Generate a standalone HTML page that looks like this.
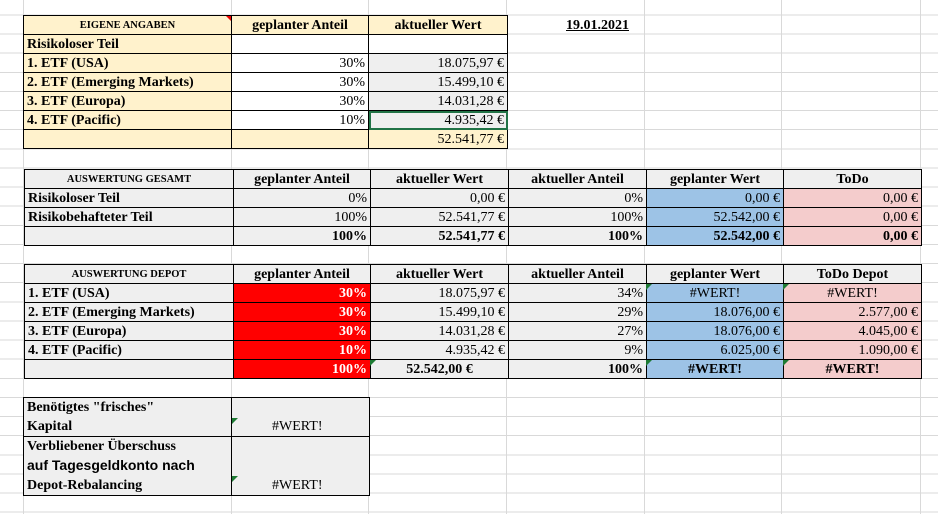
<!DOCTYPE html>
<html><head><meta charset="utf-8"><style>
body{margin:0;width:938px;height:514px;overflow:hidden;background:#fff;font-family:"Liberation Serif",serif;font-size:14px;color:#000;position:relative;
background-image:repeating-linear-gradient(to bottom,transparent 0,transparent 14.5px,#d9d9d9 14.5px,#d9d9d9 15.5px,transparent 15.5px,transparent 19.12px);}
.v{position:absolute;top:0;height:514px;width:1px;background:#d9d9d9}
table{position:absolute;border-collapse:collapse;table-layout:fixed}
td{border:1px solid #000;height:16px;padding:2px 3px 0;white-space:nowrap;overflow:hidden;line-height:16px}
.b{font-weight:bold}.r{text-align:right}.c{text-align:center}
.y{background:#fff2cc}.g{background:#efefef}.w{background:#fff}.bl{background:#9dc3e6}.p{background:#f4cccc}.red{background:#ff0000;color:#fff;font-weight:bold}
.sm{font-size:10.5px}
.tri{position:absolute;width:0;height:0;border-top:6px solid #1e7b34;border-right:6px solid transparent}
</style></head><body>
<div class="v" style="left:23px"></div><div class="v" style="left:231px"></div><div class="v" style="left:368px"></div><div class="v" style="left:506px"></div><div class="v" style="left:644px"></div><div class="v" style="left:781px"></div><div class="v" style="left:920px"></div>

<table style="left:23px;top:15px;width:484px">
<col style="width:208px"><col style="width:137px"><col style="width:139px">
<tr><td class="y b c sm">EIGENE ANGABEN</td><td class="y b c">geplanter Anteil</td><td class="y b c">aktueller Wert</td></tr>
<tr><td class="y b">Risikoloser Teil</td><td class="w"></td><td class="w"></td></tr>
<tr><td class="y b">1. ETF (USA)</td><td class="w r">30%</td><td class="g r">18.075,97 €</td></tr>
<tr><td class="y b">2. ETF (Emerging Markets)</td><td class="w r">30%</td><td class="g r">15.499,10 €</td></tr>
<tr><td class="y b">3. ETF (Europa)</td><td class="w r">30%</td><td class="g r">14.031,28 €</td></tr>
<tr><td class="y b">4. ETF (Pacific)</td><td class="w r">10%</td><td class="g r" style="outline:2px solid #217346;outline-offset:-2px">4.935,42 €</td></tr>
<tr><td class="y"></td><td class="y"></td><td class="y r">52.541,77 €</td></tr>
</table>
<div style="position:absolute;left:226px;top:16px;width:0;height:0;border-top:5px solid #e00;border-left:5px solid transparent"></div>
<div class="b" style="position:absolute;left:566px;top:18px;text-decoration:underline">19.01.2021</div>

<table style="left:24px;top:169px;width:897px">
<col style="width:209px"><col style="width:137px"><col style="width:138px"><col style="width:138px"><col style="width:137px"><col style="width:138px">
<tr><td class="g b c sm">AUSWERTUNG GESAMT</td><td class="g b c">geplanter Anteil</td><td class="g b c">aktueller Wert</td><td class="g b c">aktueller Anteil</td><td class="g b c">geplanter Wert</td><td class="g b c">ToDo</td></tr>
<tr><td class="g b">Risikoloser Teil</td><td class="g r">0%</td><td class="g r">0,00 €</td><td class="g r">0%</td><td class="bl r">0,00 €</td><td class="p r">0,00 €</td></tr>
<tr><td class="g b">Risikobehafteter Teil</td><td class="g r">100%</td><td class="g r">52.541,77 €</td><td class="g r">100%</td><td class="bl r">52.542,00 €</td><td class="p r">0,00 €</td></tr>
<tr><td class="g"></td><td class="g r b">100%</td><td class="g r b">52.541,77 €</td><td class="g r b">100%</td><td class="bl r b">52.542,00 €</td><td class="p r b">0,00 €</td></tr>
</table>

<table style="left:24px;top:264px;width:897px">
<col style="width:209px"><col style="width:137px"><col style="width:138px"><col style="width:138px"><col style="width:137px"><col style="width:138px">
<tr><td class="g b c sm">AUSWERTUNG DEPOT</td><td class="g b c">geplanter Anteil</td><td class="g b c">aktueller Wert</td><td class="g b c">aktueller Anteil</td><td class="g b c">geplanter Wert</td><td class="g b c">ToDo Depot</td></tr>
<tr><td class="g b">1. ETF (USA)</td><td class="red r">30%</td><td class="g r">18.075,97 €</td><td class="g r">34%</td><td class="bl c">#WERT!</td><td class="p c">#WERT!</td></tr>
<tr><td class="g b">2. ETF (Emerging Markets)</td><td class="red r">30%</td><td class="g r">15.499,10 €</td><td class="g r">29%</td><td class="bl r">18.076,00 €</td><td class="p r">2.577,00 €</td></tr>
<tr><td class="g b">3. ETF (Europa)</td><td class="red r">30%</td><td class="g r">14.031,28 €</td><td class="g r">27%</td><td class="bl r">18.076,00 €</td><td class="p r">4.045,00 €</td></tr>
<tr><td class="g b">4. ETF (Pacific)</td><td class="red r">10%</td><td class="g r">4.935,42 €</td><td class="g r">9%</td><td class="bl r">6.025,00 €</td><td class="p r">1.090,00 €</td></tr>
<tr><td class="g"></td><td class="red r">100%</td><td class="g c b">52.542,00 €</td><td class="g r b">100%</td><td class="bl c b">#WERT!</td><td class="p c b">#WERT!</td></tr>
</table>
<div class="tri" style="left:646px;top:284px"></div><div class="tri" style="left:783px;top:284px"></div>
<div class="tri" style="left:370px;top:360px"></div><div class="tri" style="left:646px;top:360px"></div><div class="tri" style="left:783px;top:360px"></div>

<table style="left:23px;top:397px;width:346px">
<col style="width:208px"><col style="width:138px">
<tr><td class="g b" style="height:36px;line-height:19px;padding-top:0;vertical-align:bottom">Benötigtes "frisches"<br>Kapital</td><td class="g" style="vertical-align:bottom;padding-top:0;padding-left:40px;line-height:19px">#WERT!</td></tr>
<tr><td class="g b" style="height:55px;line-height:19px;padding-top:0;vertical-align:bottom">Verbliebener Überschuss<br><span style="font-family:'Liberation Sans',sans-serif">auf Tagesgeldkonto nach</span><br>Depot-Rebalancing</td><td class="g" style="vertical-align:bottom;padding-top:0;padding-left:40px;line-height:19px">#WERT!</td></tr>
</table>
<div class="tri" style="left:232px;top:418px"></div><div class="tri" style="left:232px;top:476px"></div>
</body></html>
